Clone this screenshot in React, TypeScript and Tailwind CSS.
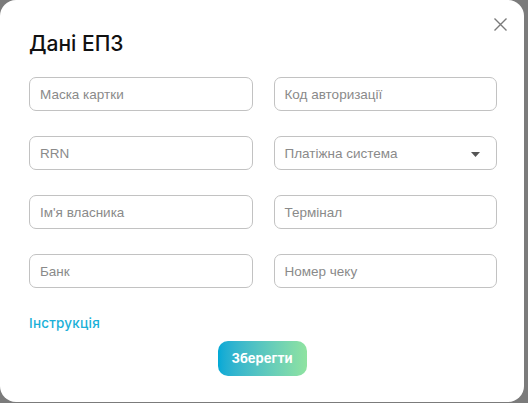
import React from 'react'

const fields = [
  { label: 'Маска картки' },
  { label: 'Код авторизації' },
  { label: 'RRN' },
  { label: 'Платіжна система', select: true },
  { label: "Ім'я власника" },
  { label: 'Термінал' },
  { label: 'Банк' },
  { label: 'Номер чеку' },
]

export default function App() {
  return (
    <div className="w-[528px] h-[403px] bg-[#7b7b7b] overflow-hidden">
      <div className="relative w-[524px] h-[402px] bg-white rounded-[16px] pl-[29px] pr-[27px] pt-[32px] font-['Liberation_Sans',sans-serif]">
        <button className="absolute right-[16px] top-[17px] text-[#7a7a7a]">
          <svg width="15" height="15" viewBox="0 0 15 15" fill="none" stroke="currentColor" strokeWidth="1.4">
            <path d="M1.5 1.5l12 12M13.5 1.5l-12 12" />
          </svg>
        </button>
        <h2 className="text-[21px] leading-[24px] text-[#111] font-medium font-['Inter',sans-serif]">Дані ЕПЗ</h2>
        <div className="mt-[21px] grid grid-cols-2 gap-x-[21px] gap-y-[25px] w-[468px]">
          {fields.map((f) => (
            <div
              key={f.label}
              className="h-[34px] border border-[#c2c2c2] rounded-[7px] flex items-center justify-between pl-[10px] pr-[16px] pt-[2px] text-[13.5px] text-[#8a8a8a]"
            >
              <span>{f.label}</span>
              {f.select && (
                <svg width="9" height="5" viewBox="0 0 9 5">
                  <path d="M0 0h9L4.5 5z" fill="#555" />
                </svg>
              )}
            </div>
          ))}
        </div>
        <div className="mt-[25px] text-[13.5px] font-medium text-[#1ab0d8] font-['Inter',sans-serif] tracking-[0.2px]">Інструкція</div>
        <div className="flex justify-center mt-[8px] pr-[2px]">
          <button className="w-[89px] h-[35px] rounded-[10px] bg-gradient-to-r from-[#00a9d6] to-[#8fe3a0] text-white text-[13px] font-bold font-['Inter',sans-serif]">
            Зберегти
          </button>
        </div>
      </div>
    </div>
  )
}
